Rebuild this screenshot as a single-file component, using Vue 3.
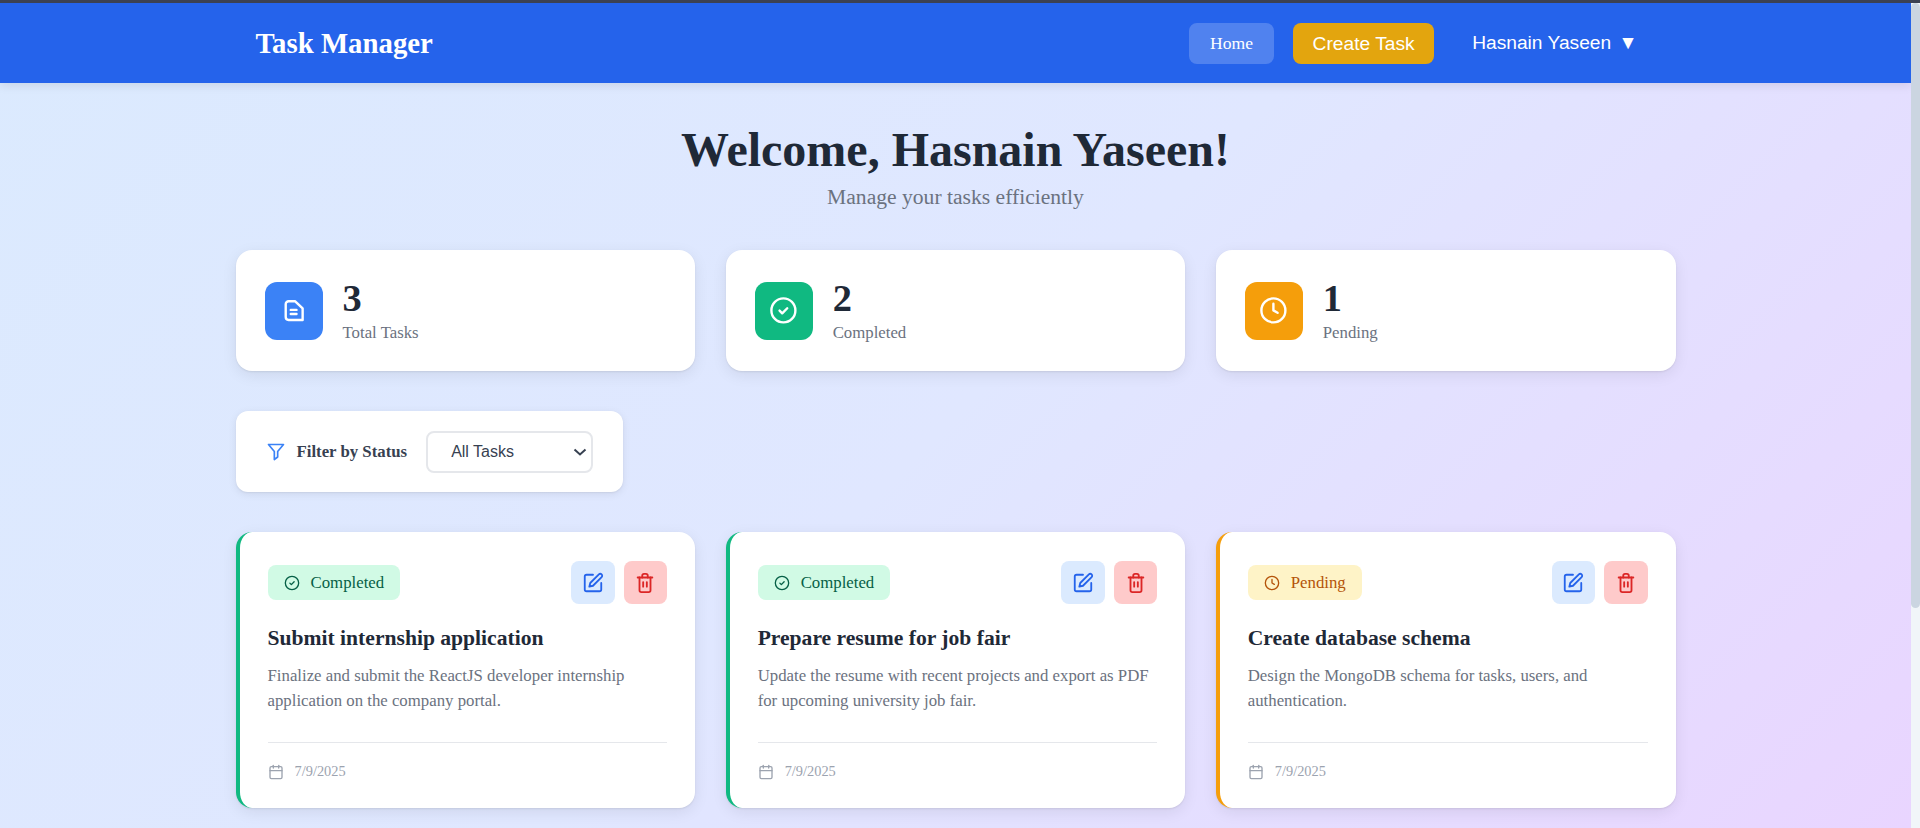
<template>
  <div class="window">
    <div class="top-strip"></div>
    <div class="viewport">
      <div class="page">
        <nav class="navbar">
          <div class="nav-inner">
            <span class="logo">Task Manager</span>
            <div class="nav-links">
              <a class="nav-home">Home</a>
              <a class="nav-create">Create Task</a>
              <a class="nav-user">Hasnain Yaseen <span class="caret">▼</span></a>
            </div>
          </div>
        </nav>

        <main class="content">
          <header class="welcome">
            <h1>Welcome, Hasnain Yaseen!</h1>
            <p>Manage your tasks efficiently</p>
          </header>

          <section class="stats">
            <div v-for="stat in stats" :key="stat.label" class="stat-card">
              <div class="stat-icon" :class="stat.tone">
                <svg viewBox="0 0 24 24" width="28.8" height="28.8" class="line-icon" stroke-width="2">
                  <path v-for="d in icons[stat.icon]" :key="d" :d="d" />
                </svg>
              </div>
              <div class="stat-text">
                <div class="stat-num">{{ stat.value }}</div>
                <div class="stat-label">{{ stat.label }}</div>
              </div>
            </div>
          </section>

          <section class="filter">
            <svg viewBox="0 0 24 24" width="20" height="20" class="line-icon filter-icon" stroke-width="2">
              <path v-for="d in icons.filter" :key="d" :d="d" />
            </svg>
            <label class="filter-label" for="status">Filter by Status</label>
            <div class="select-wrap">
              <select id="status" class="filter-select">
                <option>All Tasks</option>
                <option>Completed</option>
                <option>Pending</option>
              </select>
              <svg viewBox="0 0 14 8" width="14" height="8" class="select-arrow">
                <path d="M1.5 1.5L7 6.5l5.5-5" />
              </svg>
            </div>
          </section>

          <section class="tasks">
            <article v-for="task in tasks" :key="task.title" class="task-card" :class="task.status">
              <div class="task-top">
                <span class="badge">
                  <svg viewBox="0 0 24 24" width="16" height="16" class="line-icon" stroke-width="2">
                    <path v-for="d in icons[task.status]" :key="d" :d="d" />
                  </svg>
                  {{ task.status === 'completed' ? 'Completed' : 'Pending' }}
                </span>
                <div class="actions">
                  <button class="btn-edit" aria-label="Edit">
                    <svg viewBox="0 0 24 24" width="22" height="22" class="line-icon" stroke-width="2">
                      <path v-for="d in icons.edit" :key="d" :d="d" />
                    </svg>
                  </button>
                  <button class="btn-delete" aria-label="Delete">
                    <svg viewBox="0 0 24 24" width="22" height="22" class="line-icon" stroke-width="2">
                      <path v-for="d in icons.trash" :key="d" :d="d" />
                    </svg>
                  </button>
                </div>
              </div>
              <h3>{{ task.title }}</h3>
              <p class="desc">{{ task.desc }}</p>
              <div class="task-foot">
                <svg viewBox="0 0 24 24" width="16" height="16" class="line-icon" stroke-width="2">
                  <path v-for="d in icons.calendar" :key="d" :d="d" />
                </svg>
                <span>7/9/2025</span>
              </div>
            </article>
          </section>
        </main>
      </div>
      <!-- page scrollbar as it looks in the capture -->
      <div class="scroll-track"><div class="scroll-thumb"></div></div>
    </div>
  </div>
</template>

<script setup>
const icons = {
  file: [
    'M13.5 4.4H8a2.4 2.4 0 0 0-2.4 2.4v10.8A2.4 2.4 0 0 0 8 20h11.7V10.4z',
    'M9.8 11.6h4.8',
    'M9.8 15h4.8',
  ],
  completed: ['M12 2a10 10 0 1 0 0 20a10 10 0 1 0 0-20z', 'M8.8 12.2l2.2 2.2l4.2-4.2'],
  pending: ['M12 2a10 10 0 1 0 0 20a10 10 0 1 0 0-20z', 'M12 6.5V12l3.5 2'],
  filter: ['M3 3h18l-7 8.5V18l-4 3v-9.5z'],
  edit: [
    'M12 3H5a2 2 0 0 0-2 2v14a2 2 0 0 0 2 2h14a2 2 0 0 0 2-2v-7',
    'M18.4 2.6a2.1 2.1 0 0 1 3 3L12 15l-4 1l1-4z',
  ],
  trash: [
    'M4 6h16',
    'M18 6v14a2 2 0 0 1-2 2H8a2 2 0 0 1-2-2V6',
    'M9 6V4a2 2 0 0 1 2-2h2a2 2 0 0 1 2 2v2',
    'M10 11v5',
    'M14 11v5',
  ],
  calendar: ['M5 4h14a2 2 0 0 1 2 2v14a2 2 0 0 1-2 2H5a2 2 0 0 1-2-2V6a2 2 0 0 1 2-2z', 'M16 2v4', 'M8 2v4', 'M3 10h18'],
}

const stats = [
  { value: 3, label: 'Total Tasks', tone: 'blue', icon: 'file' },
  { value: 2, label: 'Completed', tone: 'green', icon: 'completed' },
  { value: 1, label: 'Pending', tone: 'amber', icon: 'pending' },
]

const tasks = [
  {
    title: 'Submit internship application',
    desc: 'Finalize and submit the ReactJS developer internship application on the company portal.',
    status: 'completed',
  },
  {
    title: 'Prepare resume for job fair',
    desc: 'Update the resume with recent projects and export as PDF for upcoming university job fair.',
    status: 'completed',
  },
  {
    title: 'Create database schema',
    desc: 'Design the MongoDB schema for tasks, users, and authentication.',
    status: 'pending',
  },
]
</script>

<style>
html,
body {
  margin: 0;
  height: 100%;
  overflow: hidden;
}
</style>

<style scoped>
.window {
  height: 100vh;
  display: flex;
  flex-direction: column;
  font-family: "Liberation Serif", "Times New Roman", serif;
}

.top-strip {
  height: 3px;
  flex: none;
  background: #3c4152;
}

.viewport {
  flex: 1;
  min-height: 0;
  display: flex;
}

.page {
  flex: 1;
  min-width: 0;
  overflow: hidden;
  background: linear-gradient(135deg, #dbeafe 0%, #e0e7ff 50%, #e9d5ff 100%);
}

.scroll-track {
  width: 9px;
  flex: none;
  background: #f1f5f9;
}

.scroll-thumb {
  height: 605px;
  background: #cbd5e1;
  border-radius: 5px;
}

.navbar {
  height: 80px;
  background: #2563eb;
  box-shadow: 0 2px 10px rgba(0, 0, 0, 0.1);
}

.nav-inner {
  max-width: 1400px;
  height: 100%;
  margin: 0 auto;
  display: flex;
  align-items: center;
  justify-content: space-between;
  box-sizing: border-box;
  padding-right: 18px;
}

.logo {
  color: #fff;
  font-size: 28.8px;
  font-weight: 700;
}

.nav-links {
  display: flex;
  align-items: center;
  gap: 19px;
}

.nav-home,
.nav-create {
  display: block;
  height: 41px;
  line-height: 41px;
  border-radius: 8px;
  color: #fff;
}

.nav-home {
  padding: 0 21px;
  font-size: 17.6px;
  background: rgba(255, 255, 255, 0.2);
}

.nav-create {
  padding: 0 19.5px;
  font-family: "Liberation Sans", Arial, sans-serif;
  font-size: 19.2px;
  background: #e3a50e;
}

.nav-user {
  margin-left: 19px;
  color: #fff;
  font-family: "Liberation Sans", Arial, sans-serif;
  font-size: 19.2px;
}

.caret {
  margin-left: 2px;
}

.content {
  max-width: 1440px;
  margin: 0 auto;
}

.welcome {
  padding-top: 39px;
  text-align: center;
}

.welcome h1 {
  margin: 0;
  color: #1f2937;
  font-size: 48px;
  line-height: 55px;
  font-weight: 700;
}

.welcome p {
  margin: 8px 0 0;
  color: #6b7280;
  font-size: 21.6px;
  line-height: 24px;
}

.stats,
.tasks {
  display: grid;
  grid-template-columns: repeat(3, 1fr);
  gap: 30.4px;
}

.stats {
  margin-top: 41px;
}

.stat-card {
  height: 121px;
  box-sizing: border-box;
  padding: 0 29px;
  display: flex;
  align-items: center;
  gap: 20px;
  background: #fff;
  border-radius: 16px;
  box-shadow: 0 4px 15px rgba(0, 0, 0, 0.08), 0 1px 2px rgba(0, 0, 0, 0.08);
}

.stat-icon {
  width: 58px;
  height: 58px;
  flex: none;
  display: flex;
  align-items: center;
  justify-content: center;
  border-radius: 12px;
  color: #fff;
}

.blue {
  background: #3b82f6;
}

.green {
  background: #10b981;
}

.amber {
  background: #f59e0b;
}

.line-icon {
  display: block;
  flex: none;
  fill: none;
  stroke: currentColor;
  stroke-linecap: round;
  stroke-linejoin: round;
}

.stat-text {
  margin-bottom: 4px;
}

.stat-num {
  color: #1f2937;
  font-size: 38.4px;
  line-height: 44px;
  font-weight: 700;
}

.stat-label {
  margin-top: 4px;
  color: #6b7280;
  font-size: 16.8px;
  line-height: 18px;
}

.filter {
  width: fit-content;
  height: 81px;
  box-sizing: border-box;
  margin-top: 40px;
  padding: 0 30px;
  display: flex;
  align-items: center;
  background: #fff;
  border-radius: 12px;
  box-shadow: 0 2px 8px rgba(0, 0, 0, 0.08), 0 1px 2px rgba(0, 0, 0, 0.06);
}

.filter-icon {
  color: #3b82f6;
}

.filter-label {
  margin-left: 11px;
  color: #374151;
  font-size: 16.8px;
  font-weight: 700;
}

.select-wrap {
  position: relative;
  margin-left: 19px;
}

.filter-select {
  display: block;
  width: 167px;
  height: 42px;
  padding: 0 23px;
  appearance: none;
  background: #fff;
  border: 2px solid #e5e7eb;
  border-radius: 8px;
  color: #374151;
  font-family: "Liberation Sans", Arial, sans-serif;
  font-size: 16px;
}

.select-arrow {
  position: absolute;
  top: 17px;
  right: 6px;
  fill: none;
  stroke: #374151;
  stroke-width: 2;
  pointer-events: none;
}

.tasks {
  margin-top: 40px;
}

.task-card {
  height: 276px;
  box-sizing: border-box;
  padding: 29px 28px 0 28px;
  background: #fff;
  border-left: 4px solid;
  border-radius: 16px;
  box-shadow: 0 4px 15px rgba(0, 0, 0, 0.08), 0 1px 2px rgba(0, 0, 0, 0.08);
}

.task-card.completed {
  border-left-color: #10b981;
}

.task-card.pending {
  border-left-color: #f59e0b;
}

.task-top {
  display: flex;
  align-items: center;
  justify-content: space-between;
}

.badge {
  height: 35px;
  padding: 0 16px;
  display: flex;
  align-items: center;
  gap: 11px;
  border-radius: 8px;
  font-size: 16.8px;
}

.completed .badge {
  background: #d1fae5;
  color: #065f46;
}

.pending .badge {
  background: #fef3c7;
  color: #b45309;
}

.actions {
  display: flex;
  gap: 9px;
}

.actions button {
  width: 43.5px;
  height: 43px;
  padding: 0;
  display: flex;
  align-items: center;
  justify-content: center;
  border: none;
  border-radius: 8px;
}

.btn-edit {
  background: #dbeafe;
  color: #2563eb;
}

.btn-delete {
  background: #fecaca;
  color: #dc2626;
}

.task-card h3 {
  margin: 22px 0 0;
  color: #1f2937;
  font-size: 21.6px;
  line-height: 24px;
  font-weight: 700;
}

.desc {
  height: 50px;
  margin: 13px 0 0;
  color: #6b7280;
  font-size: 16.8px;
  line-height: 25px;
}

.task-foot {
  margin-top: 29px;
  padding-top: 20px;
  display: flex;
  align-items: center;
  gap: 11px;
  border-top: 1px solid #e5e7eb;
  color: #9ca3af;
  font-size: 14.4px;
}
</style>
